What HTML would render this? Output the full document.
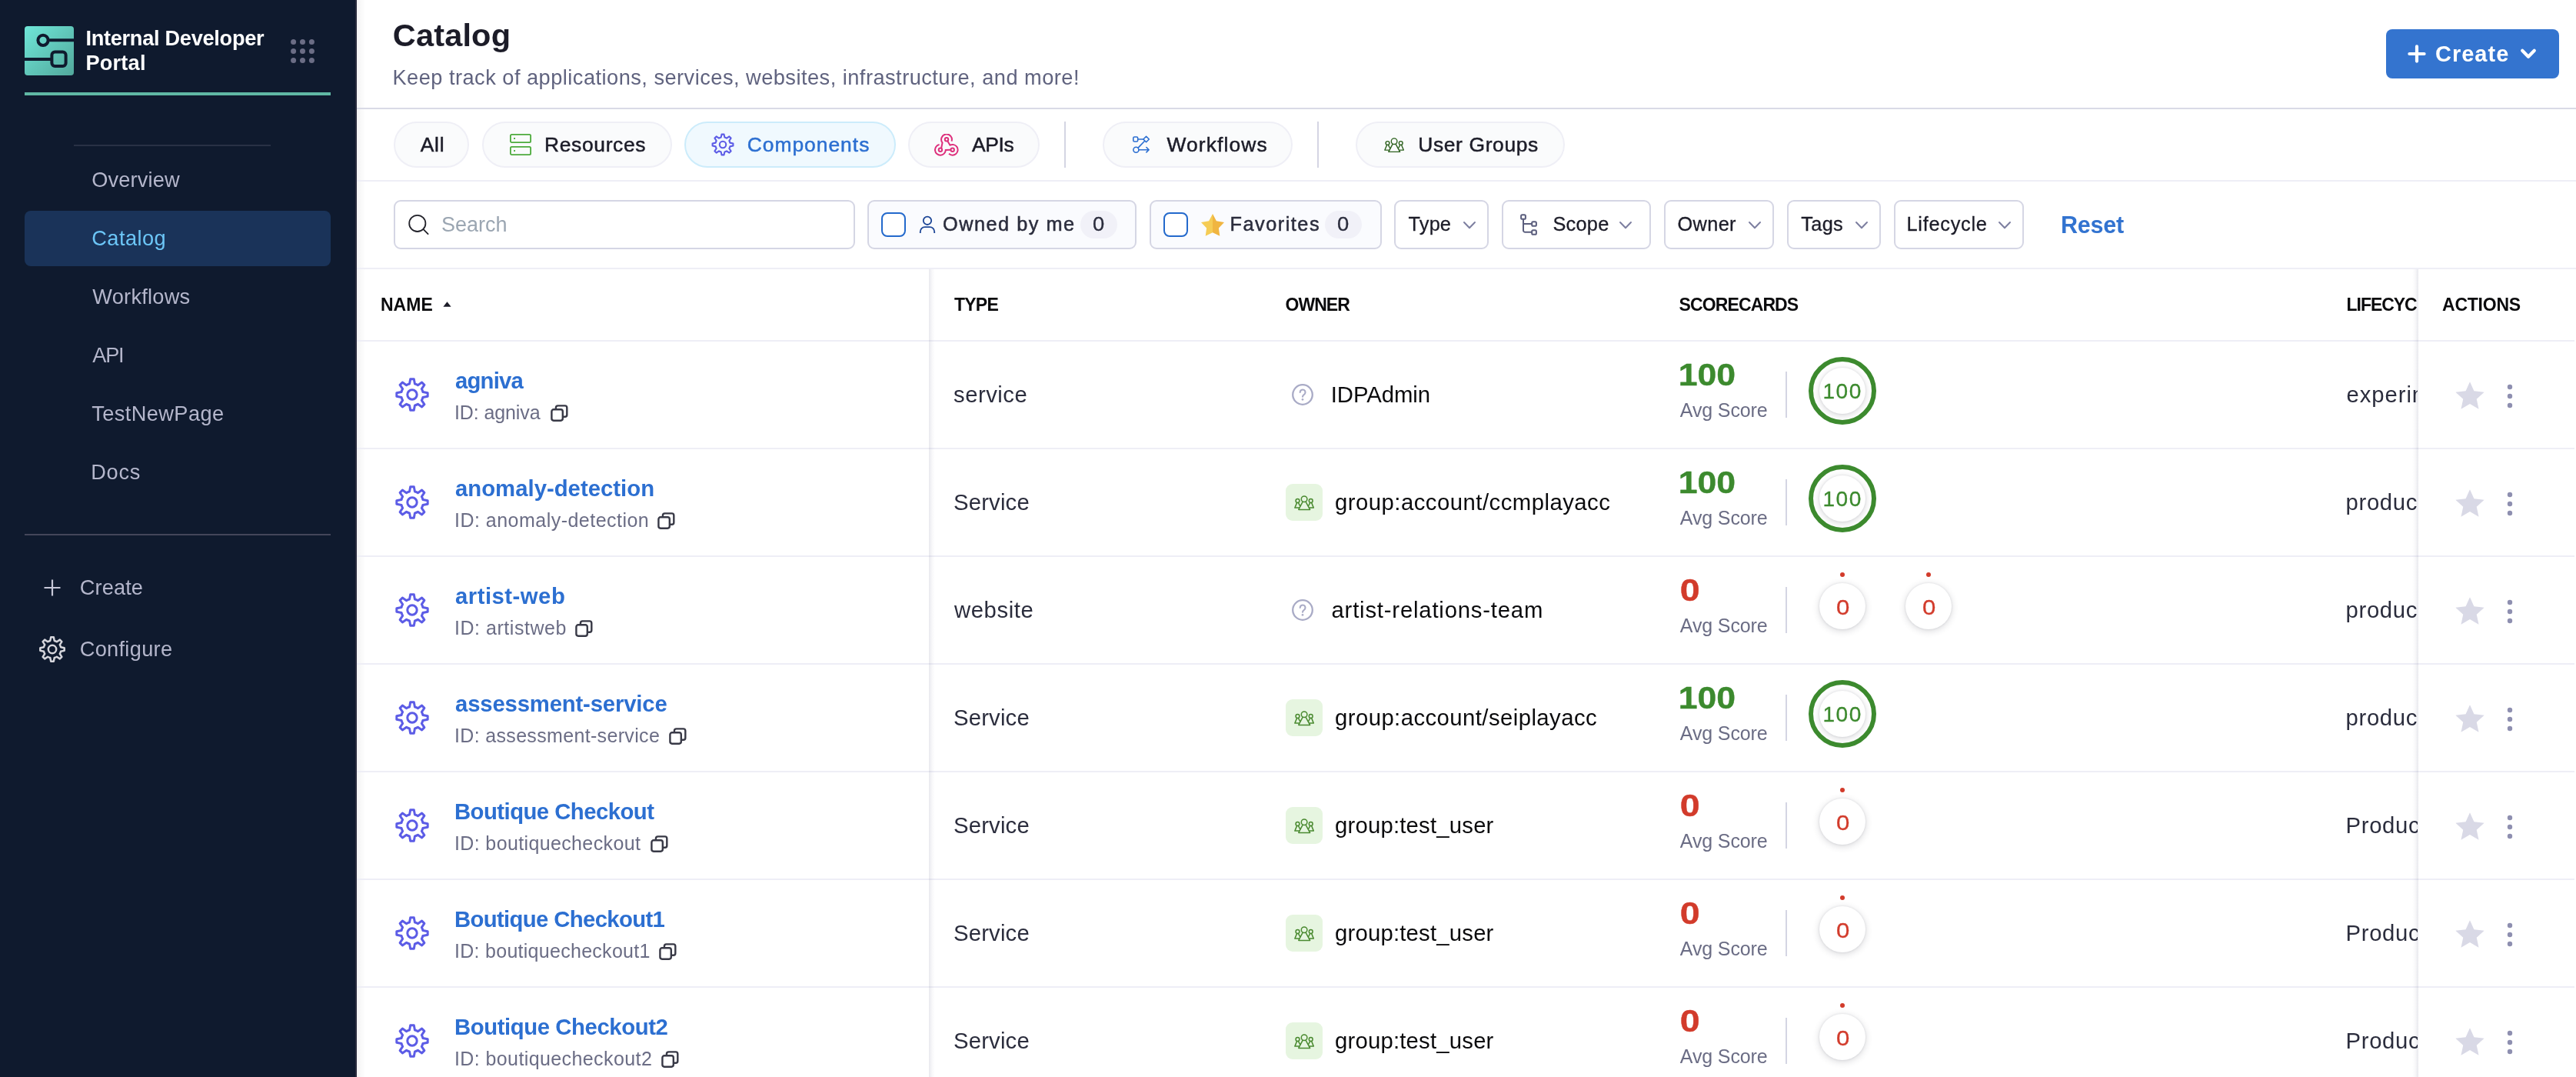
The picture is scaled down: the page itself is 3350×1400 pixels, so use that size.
<!DOCTYPE html>
<html lang="en"><head><meta charset="utf-8"><title>Catalog - Internal Developer Portal</title><style>
html,body{margin:0;padding:0}
body{width:3350px;height:1400px;overflow:hidden;position:relative;background:#fff;font-family:'Liberation Sans', sans-serif;}
#app{position:absolute;left:0;top:0;width:3350px;height:1400px;will-change:transform}
div,svg.ic,span.t{position:absolute}
div{box-sizing:content-box}
.bb{box-sizing:border-box}
span.t{line-height:1;white-space:pre}
aside,main,header,nav,section,.row{display:contents}
div.row{position:static}
</style></head><body>
<div id="app">
<aside class="sidebar">
<div style="left:0px;top:0px;width:462px;height:1400px;background:#0f1a2e;border-right:2px solid #2a2c3e"></div>
<svg class="ic" style="left:32px;top:34px" width="64" height="64" viewBox="0 0 64 64"><defs><linearGradient id="lg" x1="0" y1="0" x2="1" y2="1"><stop offset="0" stop-color="#6fe6d8"/><stop offset="1" stop-color="#52a89c"/></linearGradient></defs><rect width="64" height="64" rx="4" fill="url(#lg)"/><g fill="none" stroke="#0f1a2e" stroke-width="4"><circle cx="24" cy="18.3" r="6.6"/><path d="M31,18.2H64"/><rect x="35.4" y="33.6" width="18.2" height="18.4" rx="4"/><path d="M0,43H35"/></g></svg>
<span class="t" style="left:111.40px;top:36.28px;font-size:27.2px;color:#fff;font-weight:700;letter-spacing:-0.294px;">Internal Developer</span>
<span class="t" style="left:111.40px;top:68.28px;font-size:27.2px;color:#fff;font-weight:700;letter-spacing:0.200px;">Portal</span>
<svg class="ic" style="left:378px;top:51px" width="32" height="32" viewBox="0 0 32 32" fill="#6b6d85"><circle cx="3.6" cy="3.6" r="3.5"/><circle cx="3.6" cy="15.5" r="3.5"/><circle cx="3.6" cy="27.400000000000002" r="3.5"/><circle cx="15.5" cy="3.6" r="3.5"/><circle cx="15.5" cy="15.5" r="3.5"/><circle cx="15.5" cy="27.400000000000002" r="3.5"/><circle cx="27.400000000000002" cy="3.6" r="3.5"/><circle cx="27.400000000000002" cy="15.5" r="3.5"/><circle cx="27.400000000000002" cy="27.400000000000002" r="3.5"/></svg>
<div style="left:32px;top:120px;width:398px;height:4px;background:#60b8a4"></div>
<div style="left:96px;top:188px;width:256px;height:2px;background:#293145"></div>
<nav>
<div style="left:32px;top:274px;width:398px;height:72px;background:#1a3359;border-radius:8px"></div>
<span class="t" style="left:119.30px;top:219.98px;font-size:27.2px;color:#b4b6cb;letter-spacing:0.143px;">Overview</span>
<span class="t" style="left:119.30px;top:295.98px;font-size:27.2px;color:#6cc6f7;letter-spacing:0.433px;">Catalog</span>
<span class="t" style="left:120.30px;top:371.98px;font-size:27.2px;color:#b4b6cb;letter-spacing:0.250px;">Workflows</span>
<span class="t" style="left:120.30px;top:448.28px;font-size:27.2px;color:#b4b6cb;letter-spacing:-1.300px;">API</span>
<span class="t" style="left:119.30px;top:524.38px;font-size:27.2px;color:#b4b6cb;letter-spacing:0.400px;">TestNewPage</span>
<span class="t" style="left:118.30px;top:599.98px;font-size:27.2px;color:#b4b6cb;letter-spacing:0.667px;">Docs</span>
</nav>
<div style="left:32px;top:694px;width:398px;height:2px;background:#43465a"></div>
<svg class="ic" style="left:56px;top:752px" width="24" height="24" viewBox="0 0 24 24" stroke="#c6c7d8" stroke-width="2.2" fill="none"><path d="M12,1.5V22.5M1.5,12H22.5"/></svg>
<span class="t" style="left:103.70px;top:749.98px;font-size:27.2px;color:#b4b6cb;letter-spacing:0.140px;">Create</span>
<svg class="ic" style="left:50px;top:825.5px" width="36" height="36" viewBox="0 0 36 36" fill="none" stroke="#d6d6dc" stroke-width="2.5" stroke-linejoin="round"><path d="M15.24,6.94L16.21,2.30L19.79,2.30L20.76,6.94A11.40,11.40 0 0 1 23.87,8.23L27.84,5.63L30.37,8.16L27.77,12.13A11.40,11.40 0 0 1 29.06,15.24L33.70,16.21L33.70,19.79L29.06,20.76A11.40,11.40 0 0 1 27.77,23.87L30.37,27.84L27.84,30.37L23.87,27.77A11.40,11.40 0 0 1 20.76,29.06L19.79,33.70L16.21,33.70L15.24,29.06A11.40,11.40 0 0 1 12.13,27.77L8.16,30.37L5.63,27.84L8.23,23.87A11.40,11.40 0 0 1 6.94,20.76L2.30,19.79L2.30,16.21L6.94,15.24A11.40,11.40 0 0 1 8.23,12.13L5.63,8.16L8.16,5.63L12.13,8.23A11.40,11.40 0 0 1 15.24,6.94Z"/><circle cx="18.0" cy="18.0" r="5.2"/></svg>
<span class="t" style="left:103.70px;top:829.78px;font-size:27.2px;color:#b4b6cb;letter-spacing:0.312px;">Configure</span>
</aside>
<main>
<div style="left:464px;top:0px;width:2886px;height:1400px;background:#fff"></div>
<div style="left:464px;top:0px;width:12px;height:1400px;background:linear-gradient(90deg,rgba(0,0,0,.045),rgba(0,0,0,0))"></div>
<header>
<span class="t" style="left:510.80px;top:25.07px;font-size:41.5px;color:#1c1c28;font-weight:700;letter-spacing:0.167px;">Catalog</span>
<span class="t" style="left:510.50px;top:86.88px;font-size:27.2px;color:#60637f;letter-spacing:0.481px;">Keep track of applications, services, websites, infrastructure, and more!</span>
<div class="btn" style="left:3103px;top:38px;width:225px;height:64px;background:#3474cf;border-radius:8px"></div>
<svg class="ic" style="left:3129px;top:56px" width="28" height="28" viewBox="0 0 28 28" stroke="#fff" stroke-width="4.2" stroke-linecap="round" fill="none"><path d="M14,4.4V23.6M4.4,14H23.6"/></svg>
<span class="t" style="left:3167.00px;top:56.15px;font-size:29px;color:#fff;font-weight:700;letter-spacing:1.000px;">Create</span>
<svg class="ic" style="left:3274px;top:60px" width="28" height="20" viewBox="0 0 28 20" stroke="#fff" stroke-width="4.2" stroke-linecap="round" stroke-linejoin="round" fill="none"><path d="M6.2,5.8L14,13.8L21.8,5.8"/></svg>
<div style="left:464px;top:140px;width:2886px;height:2px;background:#d9dae6"></div>
</header>
<nav class="tabs">
<div class="bb" style="left:512px;top:158px;width:98px;height:60px;background:#fafbfc;border:2px solid #efeff6;border-radius:30px"></div>
<span class="t" style="left:546.70px;top:174.55px;font-size:26.4px;color:#1c1c28;letter-spacing:0.800px;-webkit-text-stroke:0.5px #1c1c28;">All</span>
<div class="bb" style="left:627px;top:158px;width:247px;height:60px;background:#fafbfc;border:2px solid #efeff6;border-radius:30px"></div>
<svg class="ic" style="left:662px;top:173px" width="30" height="30" viewBox="0 0 30 30" fill="none" stroke="#4dab3c" stroke-width="1.8"><rect x="1.9" y="1.9" width="26.2" height="10.2" rx="1.6"/><rect x="1.9" y="17.9" width="26.2" height="10.2" rx="1.6"/><path d="M6.2,7h1.8M6.2,23h1.8" stroke-width="1.8"/></svg>
<span class="t" style="left:708.00px;top:174.55px;font-size:26.4px;color:#1c1c28;letter-spacing:0.675px;-webkit-text-stroke:0.5px #1c1c28;">Resources</span>
<div class="bb" style="left:890px;top:158px;width:275px;height:60px;background:#f0f9fe;border:2px solid #ccecfb;border-radius:30px"></div>
<svg class="ic" style="left:924px;top:172px" width="32" height="32" viewBox="0 0 32 32" fill="none" stroke="#5c5ce6" stroke-width="2.1" stroke-linejoin="round"><path d="M13.65,6.59L14.47,2.59L17.53,2.59L18.35,6.59A9.70,9.70 0 0 1 21.00,7.69L24.40,5.43L26.57,7.60L24.31,11.00A9.70,9.70 0 0 1 25.41,13.65L29.41,14.47L29.41,17.53L25.41,18.35A9.70,9.70 0 0 1 24.31,21.00L26.57,24.40L24.40,26.57L21.00,24.31A9.70,9.70 0 0 1 18.35,25.41L17.53,29.41L14.47,29.41L13.65,25.41A9.70,9.70 0 0 1 11.00,24.31L7.60,26.57L5.43,24.40L7.69,21.00A9.70,9.70 0 0 1 6.59,18.35L2.59,17.53L2.59,14.47L6.59,13.65A9.70,9.70 0 0 1 7.69,11.00L5.43,7.60L7.60,5.43L11.00,7.69A9.70,9.70 0 0 1 13.65,6.59Z"/><circle cx="16.0" cy="16.0" r="4.2"/></svg>
<span class="t" style="left:971.70px;top:174.55px;font-size:26.4px;color:#2c6fd1;letter-spacing:1.000px;-webkit-text-stroke:0.5px #2c6fd1;">Components</span>
<div class="bb" style="left:1181px;top:158px;width:171px;height:60px;background:#fafbfc;border:2px solid #efeff6;border-radius:30px"></div>
<svg class="ic" style="left:1215px;top:174px" width="32" height="30" viewBox="0 0 32 30" fill="none" stroke="#dd307c" stroke-width="2" stroke-linecap="butt"><path d="M22.52,9.55A6.9,6.9 0 1 0 10.56,11.55L9.10,18.80M6.58,14.03A6.9,6.9 0 1 0 14.80,21.04L21.50,20.80M18.99,25.85A6.9,6.9 0 1 0 20.46,14.71L17.20,9.30"/><circle cx="16.0" cy="7.3" r="2.2"/><circle cx="7.9" cy="20.8" r="2.2"/><circle cx="23.7" cy="20.8" r="2.2"/></svg>
<span class="t" style="left:1263.90px;top:174.55px;font-size:26.4px;color:#1c1c28;letter-spacing:-0.333px;-webkit-text-stroke:0.5px #1c1c28;">APIs</span>
<div style="left:1384px;top:158px;width:2px;height:60px;background:#d4d5e3"></div>
<div class="bb" style="left:1434px;top:158px;width:247px;height:60px;background:#fafbfc;border:2px solid #efeff6;border-radius:30px"></div>
<svg class="ic" style="left:1470px;top:174px" width="28" height="28" viewBox="0 0 28 28" fill="none" stroke="#2c6fd1" stroke-width="1.6" stroke-linecap="round" stroke-linejoin="round"><rect x="3.8" y="4" width="5.9" height="6" rx="1.6"/><path d="M9.8,7H16.8"/><path d="M20.6,3.3L24.3,7L20.6,10.7L16.9,7Z"/><circle cx="7.4" cy="20.7" r="3.5"/><path d="M10.1,18.1L18.4,9.5"/><path d="M11,20.7H24M20.9,17.5L24.1,20.7L20.9,23.9"/></svg>
<span class="t" style="left:1517.40px;top:174.55px;font-size:26.4px;color:#1c1c28;letter-spacing:1.125px;-webkit-text-stroke:0.5px #1c1c28;">Workflows</span>
<div style="left:1713px;top:158px;width:2px;height:60px;background:#d4d5e3"></div>
<div class="bb" style="left:1763px;top:158px;width:272px;height:60px;background:#fafbfc;border:2px solid #efeff6;border-radius:30px"></div>
<svg class="ic" style="left:1800px;top:178px" width="28.0" height="22.0" viewBox="0 0 28 22" fill="none" stroke="#2d611e" stroke-width="1.4" stroke-linejoin="round"><circle cx="13.1" cy="5.7" r="3.8"/><circle cx="4.5" cy="8" r="2.4"/><circle cx="21.7" cy="8" r="2.4"/><path d="M11.2,9.2L5.8,19.4H20.6L15,9.2"/><path d="M3.6,10.4L0.9,17.1H7"/><path d="M5.4,10.4L7.9,15.2"/><path d="M22.6,10.4L25.3,17.1H19.2"/><path d="M20.8,10.4L18.3,15.2"/></svg>
<span class="t" style="left:1844.20px;top:174.55px;font-size:26.4px;color:#1c1c28;letter-spacing:0.650px;-webkit-text-stroke:0.5px #1c1c28;">User Groups</span>
<div style="left:464px;top:234px;width:2886px;height:2px;background:#eeeef6"></div>
</nav>
<section class="filters">
<div class="bb" style="left:512px;top:260px;width:600px;height:64px;background:#fff;border:2px solid #d5d6e4;border-radius:9px"></div>
<svg class="ic" style="left:528px;top:276px" width="32" height="32" viewBox="0 0 32 32" fill="none" stroke="#22222a" stroke-width="1.8" stroke-linecap="round"><circle cx="14.8" cy="14.4" r="10.6"/><path d="M22.6,22.2L28.6,28.2"/></svg>
<span class="t" style="left:574.00px;top:279.14px;font-size:27px;color:#9ba6b2;">Search</span>
<div class="bb" style="left:1128px;top:260px;width:350px;height:64px;background:#fafbfe;border:2px solid #d5d6e4;border-radius:9px"></div>
<div class="bb" style="left:1146px;top:276px;width:32px;height:32px;background:#fff;border:2px solid #2369cc;border-radius:8px"></div>
<svg class="ic" style="left:1194px;top:280px" width="24" height="24" viewBox="0 0 24 24" fill="none" stroke="#1c4596" stroke-width="1.8"><circle cx="12" cy="6.8" r="5.2"/><path d="M2.8,23v-1.8a6,6 0 0 1 6,-6h6.4a6,6 0 0 1 6,6V23"/></svg>
<span class="t" style="left:1226.00px;top:279.18px;font-size:25.3px;color:#2b2d3d;letter-spacing:1.500px;-webkit-text-stroke:0.5px #2b2d3d;">Owned by me</span>
<div style="left:1405px;top:274px;width:48px;height:36px;background:#f1f1f8;border-radius:18px"></div>
<span class="t" style="left:1421.00px;top:279.18px;font-size:25.3px;color:#2b2d3d;-webkit-text-stroke:0.3px #2b2d3d;transform:scaleX(1.083);transform-origin:1px 0;">0</span>
<div class="bb" style="left:1495px;top:260px;width:302px;height:64px;background:#fafbfe;border:2px solid #d5d6e4;border-radius:9px"></div>
<div class="bb" style="left:1513px;top:276px;width:32px;height:32px;background:#fff;border:2px solid #2369cc;border-radius:8px"></div>
<svg class="ic" style="left:1562px;top:278px" width="30" height="30" viewBox="0 0 30 30"><defs><linearGradient id="sg" x1="0" x2="1" y1="0" y2="0"><stop offset=".5" stop-color="#f5cc55"/><stop offset=".5" stop-color="#f0b541"/></linearGradient></defs><polygon points="15.00,0.10 19.88,9.19 30.03,11.02 22.89,18.46 24.29,28.68 15.00,24.20 5.71,28.68 7.11,18.46 -0.03,11.02 10.12,9.19" fill="url(#sg)"/></svg>
<span class="t" style="left:1599.50px;top:279.18px;font-size:25.3px;color:#2b2d3d;letter-spacing:1.500px;-webkit-text-stroke:0.5px #2b2d3d;">Favorites</span>
<div style="left:1723px;top:274px;width:48px;height:36px;background:#f1f1f8;border-radius:18px"></div>
<span class="t" style="left:1739.00px;top:279.18px;font-size:25.3px;color:#2b2d3d;-webkit-text-stroke:0.3px #2b2d3d;transform:scaleX(1.083);transform-origin:1px 0;">0</span>
<div class="bb" style="left:1813px;top:260px;width:123px;height:64px;background:#fff;border:2px solid #d5d6e4;border-radius:9px"></div>
<span class="t" style="left:1831.60px;top:279.18px;font-size:25.3px;color:#1c1c28;letter-spacing:0.167px;-webkit-text-stroke:0.3px #1c1c28;">Type</span>
<svg class="ic" style="left:1902.0px;top:286.59999999999997px" width="18" height="11.2" viewBox="-2 -2 18 11.2" fill="none" stroke="#7d7fa0" stroke-width="2" stroke-linecap="round" stroke-linejoin="round"><path d="M0,0L7.0,7.2L14,0"/></svg>
<div class="bb" style="left:1953px;top:260px;width:194px;height:64px;background:#fff;border:2px solid #d5d6e4;border-radius:9px"></div>
<svg class="ic" style="left:1976px;top:277px" width="24" height="30" viewBox="0 0 24 30" fill="none" stroke="#5b5e7d" stroke-width="2"><rect x="2.1" y="2.2" width="5.8" height="5.6" rx="1.6"/><rect x="16.2" y="11.2" width="5.7" height="5.6" rx="1.6"/><rect x="16.2" y="22.2" width="5.7" height="5.6" rx="1.6"/><path d="M5,7.8V22.4a2.4,2.4 0 0 0 2.4,2.4H16.2M5,14H16.2"/></svg>
<span class="t" style="left:2019.50px;top:279.18px;font-size:25.3px;color:#1c1c28;letter-spacing:0.250px;-webkit-text-stroke:0.3px #1c1c28;">Scope</span>
<svg class="ic" style="left:2105.3px;top:286.59999999999997px" width="18" height="11.2" viewBox="-2 -2 18 11.2" fill="none" stroke="#7d7fa0" stroke-width="2" stroke-linecap="round" stroke-linejoin="round"><path d="M0,0L7.0,7.2L14,0"/></svg>
<div class="bb" style="left:2164px;top:260px;width:143px;height:64px;background:#fff;border:2px solid #d5d6e4;border-radius:9px"></div>
<span class="t" style="left:2181.50px;top:279.18px;font-size:25.3px;color:#1c1c28;letter-spacing:0.375px;-webkit-text-stroke:0.3px #1c1c28;">Owner</span>
<svg class="ic" style="left:2273.0px;top:286.59999999999997px" width="18" height="11.2" viewBox="-2 -2 18 11.2" fill="none" stroke="#7d7fa0" stroke-width="2" stroke-linecap="round" stroke-linejoin="round"><path d="M0,0L7.0,7.2L14,0"/></svg>
<div class="bb" style="left:2324px;top:260px;width:122px;height:64px;background:#fff;border:2px solid #d5d6e4;border-radius:9px"></div>
<span class="t" style="left:2342.30px;top:279.18px;font-size:25.3px;color:#1c1c28;letter-spacing:0.333px;-webkit-text-stroke:0.3px #1c1c28;">Tags</span>
<svg class="ic" style="left:2412.0px;top:286.59999999999997px" width="18" height="11.2" viewBox="-2 -2 18 11.2" fill="none" stroke="#7d7fa0" stroke-width="2" stroke-linecap="round" stroke-linejoin="round"><path d="M0,0L7.0,7.2L14,0"/></svg>
<div class="bb" style="left:2463px;top:260px;width:169px;height:64px;background:#fff;border:2px solid #d5d6e4;border-radius:9px"></div>
<span class="t" style="left:2479.50px;top:279.18px;font-size:25.3px;color:#1c1c28;letter-spacing:0.750px;-webkit-text-stroke:0.3px #1c1c28;">Lifecycle</span>
<svg class="ic" style="left:2598.2px;top:286.59999999999997px" width="18" height="11.2" viewBox="-2 -2 18 11.2" fill="none" stroke="#7d7fa0" stroke-width="2" stroke-linecap="round" stroke-linejoin="round"><path d="M0,0L7.0,7.2L14,0"/></svg>
<span class="t" style="left:2680.00px;top:276.88px;font-size:30.5px;color:#3273d0;font-weight:700;letter-spacing:-0.250px;">Reset</span>
<div style="left:464px;top:348px;width:2886px;height:2px;background:#eeeef6"></div>
</section>
<section class="table">
<span class="t" style="left:495.00px;top:384.53px;font-size:23px;color:#0b0b0d;font-weight:700;">NAME</span>
<svg class="ic" style="left:576px;top:392px" width="11" height="7" viewBox="0 0 11 7"><path d="M5.5,0.3L10.6,6.7H0.4Z" fill="#1c1c28"/></svg>
<span class="t" style="left:1241.00px;top:384.53px;font-size:23px;color:#0b0b0d;font-weight:700;letter-spacing:-0.767px;">TYPE</span>
<span class="t" style="left:1671.60px;top:384.53px;font-size:23px;color:#0b0b0d;font-weight:700;letter-spacing:-1.000px;">OWNER</span>
<span class="t" style="left:2183.60px;top:384.53px;font-size:23px;color:#0b0b0d;font-weight:700;letter-spacing:-0.889px;">SCORECARDS</span>
<div style="left:3040px;top:350px;width:104px;height:92px;overflow:hidden"><span class="t" style="left:11.60px;top:34.53px;font-size:23px;color:#0b0b0d;font-weight:700;letter-spacing:-1.067px;">LIFECYCLE</span></div>
<span class="t" style="left:3176.00px;top:384.53px;font-size:23px;color:#0b0b0d;font-weight:700;letter-spacing:-0.233px;">ACTIONS</span>
<div style="left:464px;top:442px;width:2884px;height:2px;background:#eeeef6"></div>
<div class="row">
<svg class="ic" style="left:512px;top:489px" width="48" height="48" viewBox="0 0 48 48" fill="none" stroke="#5c5ce6" stroke-width="3.0" stroke-linejoin="round"><path d="M20.52,10.03L21.70,3.83L26.30,3.83L27.48,10.03A14.40,14.40 0 0 1 31.42,11.66L36.64,8.11L39.89,11.36L36.34,16.58A14.40,14.40 0 0 1 37.97,20.52L44.17,21.70L44.17,26.30L37.97,27.48A14.40,14.40 0 0 1 36.34,31.42L39.89,36.64L36.64,39.89L31.42,36.34A14.40,14.40 0 0 1 27.48,37.97L26.30,44.17L21.70,44.17L20.52,37.97A14.40,14.40 0 0 1 16.58,36.34L11.36,39.89L8.11,36.64L11.66,31.42A14.40,14.40 0 0 1 10.03,27.48L3.83,26.30L3.83,21.70L10.03,20.52A14.40,14.40 0 0 1 11.66,16.58L8.11,11.36L11.36,8.11L16.58,11.66A14.40,14.40 0 0 1 20.52,10.03Z"/><circle cx="24.0" cy="24.0" r="6.2"/></svg>
<span class="t" style="left:592.00px;top:479.80px;font-size:29.3px;color:#2c6fd1;font-weight:700;letter-spacing:-0.800px;">agniva</span>
<span class="t" style="left:591.00px;top:523.64px;font-size:25px;color:#6b6d85;letter-spacing:-0.111px;">ID: agniva</span>
<svg class="ic" style="left:715.5px;top:525.5px" width="24" height="24" viewBox="0 0 24 24" fill="none" stroke="#383946" stroke-width="2.4"><rect x="6.9" y="1.4" width="14.4" height="14.4" rx="2.6"/><rect x="1.4" y="6.3" width="14.4" height="14.4" rx="2.6" fill="#fff"/></svg>
<span class="t" style="left:1240.00px;top:497.70px;font-size:29.3px;color:#2b2d3d;letter-spacing:0.500px;">service</span>
<svg class="ic" style="left:1680px;top:499px" width="28" height="28" viewBox="0 0 28 28" fill="none" stroke="#a9abc6" stroke-width="2.3"><circle cx="14" cy="14" r="12.8"/><path d="M10.7,10.9a3.4,3.4 0 1 1 5.2,2.9c-1.3,0.8-1.9,1.5-1.9,2.9" stroke-linecap="round" stroke-width="2.1"/><circle cx="14" cy="20.3" r="1.35" fill="#a9abc6" stroke="none"/></svg>
<span class="t" style="left:1730.80px;top:497.70px;font-size:29.3px;color:#0b0b0d;letter-spacing:-0.071px;">IDPAdmin</span>
<span class="t" style="left:2182.80px;top:467.44px;font-size:40px;color:#3c8a2e;font-weight:700;-webkit-text-stroke:0.4px #3c8a2e;transform:scaleX(1.114);transform-origin:2px 0;">100</span>
<span class="t" style="left:2184.80px;top:520.64px;font-size:25px;color:#6b6d85;letter-spacing:-0.125px;">Avg Score</span>
<div style="left:2322px;top:483px;width:2px;height:60px;background:#d4d5e3"></div>
<div style="left:2366px;top:477.7px;width:60px;height:60px;background:#fff;border-radius:50%;box-shadow:0 2px 10px rgba(40,41,61,.19), 0 0 3px rgba(40,41,61,.11)"></div>
<svg class="ic" style="left:2352px;top:463.7px" width="88" height="88" viewBox="0 0 88 88" fill="none" stroke="#3c8a2e" stroke-width="6"><circle cx="44" cy="44" r="41"/></svg>
<span class="t" style="left:2370.40px;top:494.80px;font-size:28px;color:#3c8a2e;letter-spacing:1.600px;-webkit-text-stroke:0.3px #3c8a2e;">100</span>
<div style="left:3040px;top:444px;width:104px;height:138px;overflow:hidden"><span class="t" style="left:11.60px;top:53.70px;font-size:29.3px;color:#2b2d3d;letter-spacing:0.900px;">experimental</span></div>
<svg class="ic" style="left:3193px;top:495.5px" width="38" height="38" viewBox="0 0 38 38"><polygon points="19.00,0.20 24.41,12.36 37.64,13.74 27.75,22.64 30.52,35.66 19.00,29.00 7.48,35.66 10.25,22.64 0.36,13.74 13.59,12.36" fill="#d9d9e6"/></svg>
<svg class="ic" style="left:3259px;top:499px" width="10" height="32" viewBox="0 0 10 32" fill="#8e8fb0"><circle cx="5" cy="4" r="3.2"/><circle cx="5" cy="16" r="3.2"/><circle cx="5" cy="28" r="3.2"/></svg>
<div style="left:464px;top:582px;width:2884px;height:2px;background:#eeeef6"></div>
</div>
<div class="row">
<svg class="ic" style="left:512px;top:629px" width="48" height="48" viewBox="0 0 48 48" fill="none" stroke="#5c5ce6" stroke-width="3.0" stroke-linejoin="round"><path d="M20.52,10.03L21.70,3.83L26.30,3.83L27.48,10.03A14.40,14.40 0 0 1 31.42,11.66L36.64,8.11L39.89,11.36L36.34,16.58A14.40,14.40 0 0 1 37.97,20.52L44.17,21.70L44.17,26.30L37.97,27.48A14.40,14.40 0 0 1 36.34,31.42L39.89,36.64L36.64,39.89L31.42,36.34A14.40,14.40 0 0 1 27.48,37.97L26.30,44.17L21.70,44.17L20.52,37.97A14.40,14.40 0 0 1 16.58,36.34L11.36,39.89L8.11,36.64L11.66,31.42A14.40,14.40 0 0 1 10.03,27.48L3.83,26.30L3.83,21.70L10.03,20.52A14.40,14.40 0 0 1 11.66,16.58L8.11,11.36L11.36,8.11L16.58,11.66A14.40,14.40 0 0 1 20.52,10.03Z"/><circle cx="24.0" cy="24.0" r="6.2"/></svg>
<span class="t" style="left:592.00px;top:619.80px;font-size:29.3px;color:#2c6fd1;font-weight:700;letter-spacing:0.012px;">anomaly-detection</span>
<span class="t" style="left:591.00px;top:663.64px;font-size:25px;color:#6b6d85;letter-spacing:0.480px;">ID: anomaly-detection</span>
<svg class="ic" style="left:855.1px;top:665.5px" width="24" height="24" viewBox="0 0 24 24" fill="none" stroke="#383946" stroke-width="2.4"><rect x="6.9" y="1.4" width="14.4" height="14.4" rx="2.6"/><rect x="1.4" y="6.3" width="14.4" height="14.4" rx="2.6" fill="#fff"/></svg>
<span class="t" style="left:1240.00px;top:637.70px;font-size:29.3px;color:#2b2d3d;letter-spacing:0.167px;">Service</span>
<div style="left:1672px;top:629px;width:48px;height:48px;background:#e6f5e0;border-radius:9px"></div>
<svg class="ic" style="left:1682.7px;top:643.3px" width="28.0" height="22.0" viewBox="0 0 28 22" fill="none" stroke="#4a8a30" stroke-width="1.5" stroke-linejoin="round"><circle cx="13.1" cy="5.7" r="3.8"/><circle cx="4.5" cy="8" r="2.4"/><circle cx="21.7" cy="8" r="2.4"/><path d="M11.2,9.2L5.8,19.4H20.6L15,9.2"/><path d="M3.6,10.4L0.9,17.1H7"/><path d="M5.4,10.4L7.9,15.2"/><path d="M22.6,10.4L25.3,17.1H19.2"/><path d="M20.8,10.4L18.3,15.2"/></svg>
<span class="t" style="left:1736.00px;top:637.70px;font-size:29.3px;color:#0b0b0d;letter-spacing:0.478px;">group:account/ccmplayacc</span>
<span class="t" style="left:2182.80px;top:607.44px;font-size:40px;color:#3c8a2e;font-weight:700;-webkit-text-stroke:0.4px #3c8a2e;transform:scaleX(1.114);transform-origin:2px 0;">100</span>
<span class="t" style="left:2184.80px;top:660.64px;font-size:25px;color:#6b6d85;letter-spacing:-0.125px;">Avg Score</span>
<div style="left:2322px;top:623px;width:2px;height:60px;background:#d4d5e3"></div>
<div style="left:2366px;top:617.7px;width:60px;height:60px;background:#fff;border-radius:50%;box-shadow:0 2px 10px rgba(40,41,61,.19), 0 0 3px rgba(40,41,61,.11)"></div>
<svg class="ic" style="left:2352px;top:603.7px" width="88" height="88" viewBox="0 0 88 88" fill="none" stroke="#3c8a2e" stroke-width="6"><circle cx="44" cy="44" r="41"/></svg>
<span class="t" style="left:2370.40px;top:634.80px;font-size:28px;color:#3c8a2e;letter-spacing:1.600px;-webkit-text-stroke:0.3px #3c8a2e;">100</span>
<div style="left:3040px;top:584px;width:104px;height:138px;overflow:hidden"><span class="t" style="left:10.60px;top:53.70px;font-size:29.3px;color:#2b2d3d;letter-spacing:0.640px;">production</span></div>
<svg class="ic" style="left:3193px;top:635.5px" width="38" height="38" viewBox="0 0 38 38"><polygon points="19.00,0.20 24.41,12.36 37.64,13.74 27.75,22.64 30.52,35.66 19.00,29.00 7.48,35.66 10.25,22.64 0.36,13.74 13.59,12.36" fill="#d9d9e6"/></svg>
<svg class="ic" style="left:3259px;top:639px" width="10" height="32" viewBox="0 0 10 32" fill="#8e8fb0"><circle cx="5" cy="4" r="3.2"/><circle cx="5" cy="16" r="3.2"/><circle cx="5" cy="28" r="3.2"/></svg>
<div style="left:464px;top:722px;width:2884px;height:2px;background:#eeeef6"></div>
</div>
<div class="row">
<svg class="ic" style="left:512px;top:769px" width="48" height="48" viewBox="0 0 48 48" fill="none" stroke="#5c5ce6" stroke-width="3.0" stroke-linejoin="round"><path d="M20.52,10.03L21.70,3.83L26.30,3.83L27.48,10.03A14.40,14.40 0 0 1 31.42,11.66L36.64,8.11L39.89,11.36L36.34,16.58A14.40,14.40 0 0 1 37.97,20.52L44.17,21.70L44.17,26.30L37.97,27.48A14.40,14.40 0 0 1 36.34,31.42L39.89,36.64L36.64,39.89L31.42,36.34A14.40,14.40 0 0 1 27.48,37.97L26.30,44.17L21.70,44.17L20.52,37.97A14.40,14.40 0 0 1 16.58,36.34L11.36,39.89L8.11,36.64L11.66,31.42A14.40,14.40 0 0 1 10.03,27.48L3.83,26.30L3.83,21.70L10.03,20.52A14.40,14.40 0 0 1 11.66,16.58L8.11,11.36L11.36,8.11L16.58,11.66A14.40,14.40 0 0 1 20.52,10.03Z"/><circle cx="24.0" cy="24.0" r="6.2"/></svg>
<span class="t" style="left:592.00px;top:759.80px;font-size:29.3px;color:#2c6fd1;font-weight:700;letter-spacing:0.489px;">artist-web</span>
<span class="t" style="left:591.00px;top:803.64px;font-size:25px;color:#6b6d85;letter-spacing:0.533px;">ID: artistweb</span>
<svg class="ic" style="left:747.9px;top:805.5px" width="24" height="24" viewBox="0 0 24 24" fill="none" stroke="#383946" stroke-width="2.4"><rect x="6.9" y="1.4" width="14.4" height="14.4" rx="2.6"/><rect x="1.4" y="6.3" width="14.4" height="14.4" rx="2.6" fill="#fff"/></svg>
<span class="t" style="left:1241.00px;top:777.70px;font-size:29.3px;color:#2b2d3d;letter-spacing:0.567px;">website</span>
<svg class="ic" style="left:1680px;top:779px" width="28" height="28" viewBox="0 0 28 28" fill="none" stroke="#a9abc6" stroke-width="2.3"><circle cx="14" cy="14" r="12.8"/><path d="M10.7,10.9a3.4,3.4 0 1 1 5.2,2.9c-1.3,0.8-1.9,1.5-1.9,2.9" stroke-linecap="round" stroke-width="2.1"/><circle cx="14" cy="20.3" r="1.35" fill="#a9abc6" stroke="none"/></svg>
<span class="t" style="left:1731.50px;top:777.70px;font-size:29.3px;color:#0b0b0d;letter-spacing:0.800px;">artist-relations-team</span>
<span class="t" style="left:2184.60px;top:747.44px;font-size:40px;color:#d23b2b;font-weight:700;-webkit-text-stroke:0.4px #d23b2b;transform:scaleX(1.165);transform-origin:1px 0;">0</span>
<span class="t" style="left:2184.80px;top:800.64px;font-size:25px;color:#6b6d85;letter-spacing:-0.125px;">Avg Score</span>
<div style="left:2322px;top:763px;width:2px;height:60px;background:#d4d5e3"></div>
<div style="left:2366px;top:757.7px;width:60px;height:60px;background:#fff;border-radius:50%;box-shadow:0 2px 10px rgba(40,41,61,.19), 0 0 3px rgba(40,41,61,.11)"></div>
<div style="left:2393px;top:743.7px;width:6px;height:6px;background:#d23b2b;border-radius:50%"></div>
<span class="t" style="left:2387.50px;top:774.54px;font-size:28.3px;color:#d23b2b;-webkit-text-stroke:0.3px #d23b2b;transform:scaleX(1.100);transform-origin:1px 0;">0</span>
<div style="left:2478px;top:757.7px;width:60px;height:60px;background:#fff;border-radius:50%;box-shadow:0 2px 10px rgba(40,41,61,.19), 0 0 3px rgba(40,41,61,.11)"></div>
<div style="left:2505px;top:743.7px;width:6px;height:6px;background:#d23b2b;border-radius:50%"></div>
<span class="t" style="left:2499.50px;top:774.54px;font-size:28.3px;color:#d23b2b;-webkit-text-stroke:0.3px #d23b2b;transform:scaleX(1.100);transform-origin:1px 0;">0</span>
<div style="left:3040px;top:724px;width:104px;height:138px;overflow:hidden"><span class="t" style="left:10.60px;top:53.70px;font-size:29.3px;color:#2b2d3d;letter-spacing:0.640px;">production</span></div>
<svg class="ic" style="left:3193px;top:775.5px" width="38" height="38" viewBox="0 0 38 38"><polygon points="19.00,0.20 24.41,12.36 37.64,13.74 27.75,22.64 30.52,35.66 19.00,29.00 7.48,35.66 10.25,22.64 0.36,13.74 13.59,12.36" fill="#d9d9e6"/></svg>
<svg class="ic" style="left:3259px;top:779px" width="10" height="32" viewBox="0 0 10 32" fill="#8e8fb0"><circle cx="5" cy="4" r="3.2"/><circle cx="5" cy="16" r="3.2"/><circle cx="5" cy="28" r="3.2"/></svg>
<div style="left:464px;top:862px;width:2884px;height:2px;background:#eeeef6"></div>
</div>
<div class="row">
<svg class="ic" style="left:512px;top:909px" width="48" height="48" viewBox="0 0 48 48" fill="none" stroke="#5c5ce6" stroke-width="3.0" stroke-linejoin="round"><path d="M20.52,10.03L21.70,3.83L26.30,3.83L27.48,10.03A14.40,14.40 0 0 1 31.42,11.66L36.64,8.11L39.89,11.36L36.34,16.58A14.40,14.40 0 0 1 37.97,20.52L44.17,21.70L44.17,26.30L37.97,27.48A14.40,14.40 0 0 1 36.34,31.42L39.89,36.64L36.64,39.89L31.42,36.34A14.40,14.40 0 0 1 27.48,37.97L26.30,44.17L21.70,44.17L20.52,37.97A14.40,14.40 0 0 1 16.58,36.34L11.36,39.89L8.11,36.64L11.66,31.42A14.40,14.40 0 0 1 10.03,27.48L3.83,26.30L3.83,21.70L10.03,20.52A14.40,14.40 0 0 1 11.66,16.58L8.11,11.36L11.36,8.11L16.58,11.66A14.40,14.40 0 0 1 20.52,10.03Z"/><circle cx="24.0" cy="24.0" r="6.2"/></svg>
<span class="t" style="left:592.00px;top:899.80px;font-size:29.3px;color:#2c6fd1;font-weight:700;letter-spacing:-0.165px;">assessment-service</span>
<span class="t" style="left:591.00px;top:943.64px;font-size:25px;color:#6b6d85;letter-spacing:0.333px;">ID: assessment-service</span>
<svg class="ic" style="left:869.5px;top:945.5px" width="24" height="24" viewBox="0 0 24 24" fill="none" stroke="#383946" stroke-width="2.4"><rect x="6.9" y="1.4" width="14.4" height="14.4" rx="2.6"/><rect x="1.4" y="6.3" width="14.4" height="14.4" rx="2.6" fill="#fff"/></svg>
<span class="t" style="left:1240.00px;top:917.70px;font-size:29.3px;color:#2b2d3d;letter-spacing:0.167px;">Service</span>
<div style="left:1672px;top:909px;width:48px;height:48px;background:#e6f5e0;border-radius:9px"></div>
<svg class="ic" style="left:1682.7px;top:923.3px" width="28.0" height="22.0" viewBox="0 0 28 22" fill="none" stroke="#4a8a30" stroke-width="1.5" stroke-linejoin="round"><circle cx="13.1" cy="5.7" r="3.8"/><circle cx="4.5" cy="8" r="2.4"/><circle cx="21.7" cy="8" r="2.4"/><path d="M11.2,9.2L5.8,19.4H20.6L15,9.2"/><path d="M3.6,10.4L0.9,17.1H7"/><path d="M5.4,10.4L7.9,15.2"/><path d="M22.6,10.4L25.3,17.1H19.2"/><path d="M20.8,10.4L18.3,15.2"/></svg>
<span class="t" style="left:1736.00px;top:917.70px;font-size:29.3px;color:#0b0b0d;letter-spacing:0.435px;">group:account/seiplayacc</span>
<span class="t" style="left:2182.80px;top:887.44px;font-size:40px;color:#3c8a2e;font-weight:700;-webkit-text-stroke:0.4px #3c8a2e;transform:scaleX(1.114);transform-origin:2px 0;">100</span>
<span class="t" style="left:2184.80px;top:940.64px;font-size:25px;color:#6b6d85;letter-spacing:-0.125px;">Avg Score</span>
<div style="left:2322px;top:903px;width:2px;height:60px;background:#d4d5e3"></div>
<div style="left:2366px;top:897.7px;width:60px;height:60px;background:#fff;border-radius:50%;box-shadow:0 2px 10px rgba(40,41,61,.19), 0 0 3px rgba(40,41,61,.11)"></div>
<svg class="ic" style="left:2352px;top:883.7px" width="88" height="88" viewBox="0 0 88 88" fill="none" stroke="#3c8a2e" stroke-width="6"><circle cx="44" cy="44" r="41"/></svg>
<span class="t" style="left:2370.40px;top:914.80px;font-size:28px;color:#3c8a2e;letter-spacing:1.600px;-webkit-text-stroke:0.3px #3c8a2e;">100</span>
<div style="left:3040px;top:864px;width:104px;height:138px;overflow:hidden"><span class="t" style="left:10.60px;top:53.70px;font-size:29.3px;color:#2b2d3d;letter-spacing:0.640px;">production</span></div>
<svg class="ic" style="left:3193px;top:915.5px" width="38" height="38" viewBox="0 0 38 38"><polygon points="19.00,0.20 24.41,12.36 37.64,13.74 27.75,22.64 30.52,35.66 19.00,29.00 7.48,35.66 10.25,22.64 0.36,13.74 13.59,12.36" fill="#d9d9e6"/></svg>
<svg class="ic" style="left:3259px;top:919px" width="10" height="32" viewBox="0 0 10 32" fill="#8e8fb0"><circle cx="5" cy="4" r="3.2"/><circle cx="5" cy="16" r="3.2"/><circle cx="5" cy="28" r="3.2"/></svg>
<div style="left:464px;top:1002px;width:2884px;height:2px;background:#eeeef6"></div>
</div>
<div class="row">
<svg class="ic" style="left:512px;top:1049px" width="48" height="48" viewBox="0 0 48 48" fill="none" stroke="#5c5ce6" stroke-width="3.0" stroke-linejoin="round"><path d="M20.52,10.03L21.70,3.83L26.30,3.83L27.48,10.03A14.40,14.40 0 0 1 31.42,11.66L36.64,8.11L39.89,11.36L36.34,16.58A14.40,14.40 0 0 1 37.97,20.52L44.17,21.70L44.17,26.30L37.97,27.48A14.40,14.40 0 0 1 36.34,31.42L39.89,36.64L36.64,39.89L31.42,36.34A14.40,14.40 0 0 1 27.48,37.97L26.30,44.17L21.70,44.17L20.52,37.97A14.40,14.40 0 0 1 16.58,36.34L11.36,39.89L8.11,36.64L11.66,31.42A14.40,14.40 0 0 1 10.03,27.48L3.83,26.30L3.83,21.70L10.03,20.52A14.40,14.40 0 0 1 11.66,16.58L8.11,11.36L11.36,8.11L16.58,11.66A14.40,14.40 0 0 1 20.52,10.03Z"/><circle cx="24.0" cy="24.0" r="6.2"/></svg>
<span class="t" style="left:591.00px;top:1039.80px;font-size:29.3px;color:#2c6fd1;font-weight:700;letter-spacing:-0.538px;">Boutique Checkout</span>
<span class="t" style="left:591.00px;top:1083.64px;font-size:25px;color:#6b6d85;letter-spacing:0.368px;">ID: boutiquecheckout</span>
<svg class="ic" style="left:845.5px;top:1085.5px" width="24" height="24" viewBox="0 0 24 24" fill="none" stroke="#383946" stroke-width="2.4"><rect x="6.9" y="1.4" width="14.4" height="14.4" rx="2.6"/><rect x="1.4" y="6.3" width="14.4" height="14.4" rx="2.6" fill="#fff"/></svg>
<span class="t" style="left:1240.00px;top:1057.70px;font-size:29.3px;color:#2b2d3d;letter-spacing:0.167px;">Service</span>
<div style="left:1672px;top:1049px;width:48px;height:48px;background:#e6f5e0;border-radius:9px"></div>
<svg class="ic" style="left:1682.7px;top:1063.3px" width="28.0" height="22.0" viewBox="0 0 28 22" fill="none" stroke="#4a8a30" stroke-width="1.5" stroke-linejoin="round"><circle cx="13.1" cy="5.7" r="3.8"/><circle cx="4.5" cy="8" r="2.4"/><circle cx="21.7" cy="8" r="2.4"/><path d="M11.2,9.2L5.8,19.4H20.6L15,9.2"/><path d="M3.6,10.4L0.9,17.1H7"/><path d="M5.4,10.4L7.9,15.2"/><path d="M22.6,10.4L25.3,17.1H19.2"/><path d="M20.8,10.4L18.3,15.2"/></svg>
<span class="t" style="left:1736.00px;top:1057.70px;font-size:29.3px;color:#0b0b0d;letter-spacing:0.200px;">group:test_user</span>
<span class="t" style="left:2184.60px;top:1027.44px;font-size:40px;color:#d23b2b;font-weight:700;-webkit-text-stroke:0.4px #d23b2b;transform:scaleX(1.165);transform-origin:1px 0;">0</span>
<span class="t" style="left:2184.80px;top:1080.64px;font-size:25px;color:#6b6d85;letter-spacing:-0.125px;">Avg Score</span>
<div style="left:2322px;top:1043px;width:2px;height:60px;background:#d4d5e3"></div>
<div style="left:2366px;top:1037.7px;width:60px;height:60px;background:#fff;border-radius:50%;box-shadow:0 2px 10px rgba(40,41,61,.19), 0 0 3px rgba(40,41,61,.11)"></div>
<div style="left:2393px;top:1023.7px;width:6px;height:6px;background:#d23b2b;border-radius:50%"></div>
<span class="t" style="left:2387.50px;top:1054.54px;font-size:28.3px;color:#d23b2b;-webkit-text-stroke:0.3px #d23b2b;transform:scaleX(1.100);transform-origin:1px 0;">0</span>
<div style="left:3040px;top:1004px;width:104px;height:138px;overflow:hidden"><span class="t" style="left:10.60px;top:53.70px;font-size:29.3px;color:#2b2d3d;letter-spacing:0.640px;">Production</span></div>
<svg class="ic" style="left:3193px;top:1055.5px" width="38" height="38" viewBox="0 0 38 38"><polygon points="19.00,0.20 24.41,12.36 37.64,13.74 27.75,22.64 30.52,35.66 19.00,29.00 7.48,35.66 10.25,22.64 0.36,13.74 13.59,12.36" fill="#d9d9e6"/></svg>
<svg class="ic" style="left:3259px;top:1059px" width="10" height="32" viewBox="0 0 10 32" fill="#8e8fb0"><circle cx="5" cy="4" r="3.2"/><circle cx="5" cy="16" r="3.2"/><circle cx="5" cy="28" r="3.2"/></svg>
<div style="left:464px;top:1142px;width:2884px;height:2px;background:#eeeef6"></div>
</div>
<div class="row">
<svg class="ic" style="left:512px;top:1189px" width="48" height="48" viewBox="0 0 48 48" fill="none" stroke="#5c5ce6" stroke-width="3.0" stroke-linejoin="round"><path d="M20.52,10.03L21.70,3.83L26.30,3.83L27.48,10.03A14.40,14.40 0 0 1 31.42,11.66L36.64,8.11L39.89,11.36L36.34,16.58A14.40,14.40 0 0 1 37.97,20.52L44.17,21.70L44.17,26.30L37.97,27.48A14.40,14.40 0 0 1 36.34,31.42L39.89,36.64L36.64,39.89L31.42,36.34A14.40,14.40 0 0 1 27.48,37.97L26.30,44.17L21.70,44.17L20.52,37.97A14.40,14.40 0 0 1 16.58,36.34L11.36,39.89L8.11,36.64L11.66,31.42A14.40,14.40 0 0 1 10.03,27.48L3.83,26.30L3.83,21.70L10.03,20.52A14.40,14.40 0 0 1 11.66,16.58L8.11,11.36L11.36,8.11L16.58,11.66A14.40,14.40 0 0 1 20.52,10.03Z"/><circle cx="24.0" cy="24.0" r="6.2"/></svg>
<span class="t" style="left:591.00px;top:1179.80px;font-size:29.3px;color:#2c6fd1;font-weight:700;letter-spacing:-0.647px;">Boutique Checkout1</span>
<span class="t" style="left:591.00px;top:1223.64px;font-size:25px;color:#6b6d85;letter-spacing:0.280px;">ID: boutiquecheckout1</span>
<svg class="ic" style="left:857.1px;top:1225.5px" width="24" height="24" viewBox="0 0 24 24" fill="none" stroke="#383946" stroke-width="2.4"><rect x="6.9" y="1.4" width="14.4" height="14.4" rx="2.6"/><rect x="1.4" y="6.3" width="14.4" height="14.4" rx="2.6" fill="#fff"/></svg>
<span class="t" style="left:1240.00px;top:1197.70px;font-size:29.3px;color:#2b2d3d;letter-spacing:0.167px;">Service</span>
<div style="left:1672px;top:1189px;width:48px;height:48px;background:#e6f5e0;border-radius:9px"></div>
<svg class="ic" style="left:1682.7px;top:1203.3px" width="28.0" height="22.0" viewBox="0 0 28 22" fill="none" stroke="#4a8a30" stroke-width="1.5" stroke-linejoin="round"><circle cx="13.1" cy="5.7" r="3.8"/><circle cx="4.5" cy="8" r="2.4"/><circle cx="21.7" cy="8" r="2.4"/><path d="M11.2,9.2L5.8,19.4H20.6L15,9.2"/><path d="M3.6,10.4L0.9,17.1H7"/><path d="M5.4,10.4L7.9,15.2"/><path d="M22.6,10.4L25.3,17.1H19.2"/><path d="M20.8,10.4L18.3,15.2"/></svg>
<span class="t" style="left:1736.00px;top:1197.70px;font-size:29.3px;color:#0b0b0d;letter-spacing:0.200px;">group:test_user</span>
<span class="t" style="left:2184.60px;top:1167.44px;font-size:40px;color:#d23b2b;font-weight:700;-webkit-text-stroke:0.4px #d23b2b;transform:scaleX(1.165);transform-origin:1px 0;">0</span>
<span class="t" style="left:2184.80px;top:1220.64px;font-size:25px;color:#6b6d85;letter-spacing:-0.125px;">Avg Score</span>
<div style="left:2322px;top:1183px;width:2px;height:60px;background:#d4d5e3"></div>
<div style="left:2366px;top:1177.7px;width:60px;height:60px;background:#fff;border-radius:50%;box-shadow:0 2px 10px rgba(40,41,61,.19), 0 0 3px rgba(40,41,61,.11)"></div>
<div style="left:2393px;top:1163.7px;width:6px;height:6px;background:#d23b2b;border-radius:50%"></div>
<span class="t" style="left:2387.50px;top:1194.54px;font-size:28.3px;color:#d23b2b;-webkit-text-stroke:0.3px #d23b2b;transform:scaleX(1.100);transform-origin:1px 0;">0</span>
<div style="left:3040px;top:1144px;width:104px;height:138px;overflow:hidden"><span class="t" style="left:10.60px;top:53.70px;font-size:29.3px;color:#2b2d3d;letter-spacing:0.640px;">Production</span></div>
<svg class="ic" style="left:3193px;top:1195.5px" width="38" height="38" viewBox="0 0 38 38"><polygon points="19.00,0.20 24.41,12.36 37.64,13.74 27.75,22.64 30.52,35.66 19.00,29.00 7.48,35.66 10.25,22.64 0.36,13.74 13.59,12.36" fill="#d9d9e6"/></svg>
<svg class="ic" style="left:3259px;top:1199px" width="10" height="32" viewBox="0 0 10 32" fill="#8e8fb0"><circle cx="5" cy="4" r="3.2"/><circle cx="5" cy="16" r="3.2"/><circle cx="5" cy="28" r="3.2"/></svg>
<div style="left:464px;top:1282px;width:2884px;height:2px;background:#eeeef6"></div>
</div>
<div class="row">
<svg class="ic" style="left:512px;top:1329px" width="48" height="48" viewBox="0 0 48 48" fill="none" stroke="#5c5ce6" stroke-width="3.0" stroke-linejoin="round"><path d="M20.52,10.03L21.70,3.83L26.30,3.83L27.48,10.03A14.40,14.40 0 0 1 31.42,11.66L36.64,8.11L39.89,11.36L36.34,16.58A14.40,14.40 0 0 1 37.97,20.52L44.17,21.70L44.17,26.30L37.97,27.48A14.40,14.40 0 0 1 36.34,31.42L39.89,36.64L36.64,39.89L31.42,36.34A14.40,14.40 0 0 1 27.48,37.97L26.30,44.17L21.70,44.17L20.52,37.97A14.40,14.40 0 0 1 16.58,36.34L11.36,39.89L8.11,36.64L11.66,31.42A14.40,14.40 0 0 1 10.03,27.48L3.83,26.30L3.83,21.70L10.03,20.52A14.40,14.40 0 0 1 11.66,16.58L8.11,11.36L11.36,8.11L16.58,11.66A14.40,14.40 0 0 1 20.52,10.03Z"/><circle cx="24.0" cy="24.0" r="6.2"/></svg>
<span class="t" style="left:591.00px;top:1319.80px;font-size:29.3px;color:#2c6fd1;font-weight:700;letter-spacing:-0.412px;">Boutique Checkout2</span>
<span class="t" style="left:591.00px;top:1363.64px;font-size:25px;color:#6b6d85;letter-spacing:0.400px;">ID: boutiquecheckout2</span>
<svg class="ic" style="left:859.5px;top:1365.5px" width="24" height="24" viewBox="0 0 24 24" fill="none" stroke="#383946" stroke-width="2.4"><rect x="6.9" y="1.4" width="14.4" height="14.4" rx="2.6"/><rect x="1.4" y="6.3" width="14.4" height="14.4" rx="2.6" fill="#fff"/></svg>
<span class="t" style="left:1240.00px;top:1337.70px;font-size:29.3px;color:#2b2d3d;letter-spacing:0.167px;">Service</span>
<div style="left:1672px;top:1329px;width:48px;height:48px;background:#e6f5e0;border-radius:9px"></div>
<svg class="ic" style="left:1682.7px;top:1343.3px" width="28.0" height="22.0" viewBox="0 0 28 22" fill="none" stroke="#4a8a30" stroke-width="1.5" stroke-linejoin="round"><circle cx="13.1" cy="5.7" r="3.8"/><circle cx="4.5" cy="8" r="2.4"/><circle cx="21.7" cy="8" r="2.4"/><path d="M11.2,9.2L5.8,19.4H20.6L15,9.2"/><path d="M3.6,10.4L0.9,17.1H7"/><path d="M5.4,10.4L7.9,15.2"/><path d="M22.6,10.4L25.3,17.1H19.2"/><path d="M20.8,10.4L18.3,15.2"/></svg>
<span class="t" style="left:1736.00px;top:1337.70px;font-size:29.3px;color:#0b0b0d;letter-spacing:0.200px;">group:test_user</span>
<span class="t" style="left:2184.60px;top:1307.44px;font-size:40px;color:#d23b2b;font-weight:700;-webkit-text-stroke:0.4px #d23b2b;transform:scaleX(1.165);transform-origin:1px 0;">0</span>
<span class="t" style="left:2184.80px;top:1360.64px;font-size:25px;color:#6b6d85;letter-spacing:-0.125px;">Avg Score</span>
<div style="left:2322px;top:1323px;width:2px;height:60px;background:#d4d5e3"></div>
<div style="left:2366px;top:1317.7px;width:60px;height:60px;background:#fff;border-radius:50%;box-shadow:0 2px 10px rgba(40,41,61,.19), 0 0 3px rgba(40,41,61,.11)"></div>
<div style="left:2393px;top:1303.7px;width:6px;height:6px;background:#d23b2b;border-radius:50%"></div>
<span class="t" style="left:2387.50px;top:1334.54px;font-size:28.3px;color:#d23b2b;-webkit-text-stroke:0.3px #d23b2b;transform:scaleX(1.100);transform-origin:1px 0;">0</span>
<div style="left:3040px;top:1284px;width:104px;height:138px;overflow:hidden"><span class="t" style="left:10.60px;top:53.70px;font-size:29.3px;color:#2b2d3d;letter-spacing:0.640px;">Production</span></div>
<svg class="ic" style="left:3193px;top:1335.5px" width="38" height="38" viewBox="0 0 38 38"><polygon points="19.00,0.20 24.41,12.36 37.64,13.74 27.75,22.64 30.52,35.66 19.00,29.00 7.48,35.66 10.25,22.64 0.36,13.74 13.59,12.36" fill="#d9d9e6"/></svg>
<svg class="ic" style="left:3259px;top:1339px" width="10" height="32" viewBox="0 0 10 32" fill="#8e8fb0"><circle cx="5" cy="4" r="3.2"/><circle cx="5" cy="16" r="3.2"/><circle cx="5" cy="28" r="3.2"/></svg>
<div style="left:464px;top:1422px;width:2884px;height:2px;background:#eeeef6"></div>
</div>
<div style="left:1207.5px;top:350px;width:8px;height:1050px;background:linear-gradient(90deg,rgba(40,41,90,.10),rgba(40,41,90,.025) 60%,rgba(40,41,90,0))"></div>
<div style="left:3136.5px;top:350px;width:8px;height:1050px;background:linear-gradient(270deg,rgba(40,41,90,.10),rgba(40,41,90,.025) 60%,rgba(40,41,90,0))"></div>
</section>
</main>
</div>
</body></html>
